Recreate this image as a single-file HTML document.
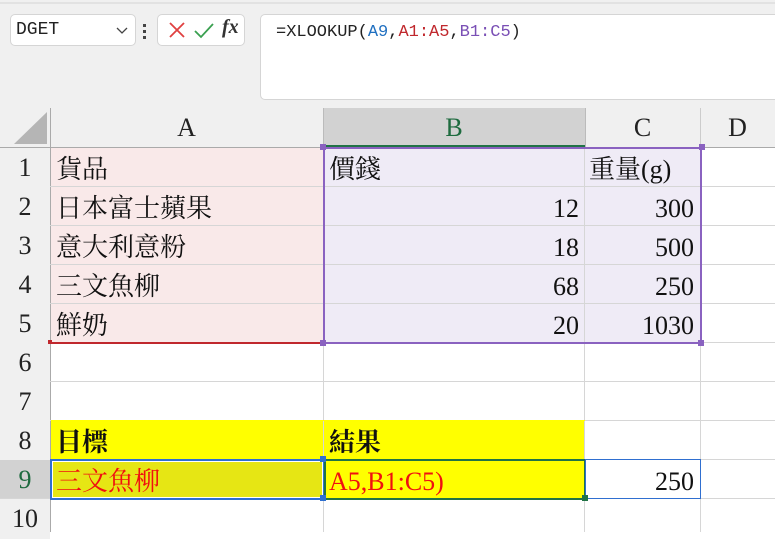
<!DOCTYPE html>
<html><head><meta charset="utf-8"><style>
*{margin:0;padding:0;box-sizing:border-box}
body{width:775px;height:532px;overflow:hidden;background:#fff;position:relative;font-family:"Liberation Serif","Noto Serif CJK TC","Noto Serif CJK SC",serif}
.a{position:absolute}
.top{left:0;top:0;width:775px;height:108px;background:#f0f0f0}
.box{background:#fff;border:1px solid #d5d5d5;border-radius:5px}
.mono{font-family:"Liberation Mono",monospace;font-size:17px}
.hdr{background:#f0f0f0;color:#222;font-size:26px;text-align:center;line-height:40px}
.cell{font-size:26px;line-height:38px;color:#111;white-space:nowrap}
.hl{background:#d4d4d4}
.r{text-align:right;padding-right:6px}
</style></head><body>
<div class="a top"></div>
<div class="a" style="left:0;top:2px;width:775px;height:2px;background:#e2e2e2"></div>
<div class="a box" style="left:10px;top:14px;width:126px;height:32px"></div>
<div class="a" style="left:16px;top:20px;font-family:'Liberation Mono',monospace;font-size:18px;color:#222">DGET</div>
<svg class="a" style="left:116px;top:27px" width="12" height="8"><path d="M1 1 L6 6 L11 1" stroke="#444" fill="none" stroke-width="1.3"/></svg>
<div class="a" style="left:143px;top:24px;width:3px;height:3px;background:#444"></div>
<div class="a" style="left:143px;top:30px;width:3px;height:3px;background:#444"></div>
<div class="a" style="left:143px;top:36px;width:3px;height:3px;background:#444"></div>
<div class="a box" style="left:157px;top:14px;width:88px;height:32px"></div>
<svg class="a" style="left:168px;top:21px" width="18" height="18"><path d="M2 2 L16 16 M16 2 L2 16" stroke="#e04040" stroke-width="1.8"/></svg>
<svg class="a" style="left:193px;top:21px" width="22" height="18"><path d="M2 10 L8 16 L20 3" stroke="#3aa050" fill="none" stroke-width="1.8"/></svg>
<div class="a" style="left:222px;top:16px;font-style:italic;font-weight:bold;font-size:20px;color:#333">fx</div>
<div class="a box" style="left:260px;top:14px;width:530px;height:86px"></div>
<div class="a mono" style="left:276px;top:23px;color:#222">=XLOOKUP(<span style="color:#1f6fc0">A9</span>,<span style="color:#c0282d">A1:A5</span>,<span style="color:#7a4fb5">B1:C5</span>)</div>

<div class="a" style="left:0;top:108px;width:775px;height:40px;background:#f0f0f0"></div>
<svg class="a" style="left:14px;top:112px" width="34" height="33"><path d="M33 0 L33 32 L0 32 Z" fill="#b5b5b5"/></svg>
<div class="a hdr" style="left:50px;top:108px;width:273px">A</div>
<div class="a hdr hl" style="left:323px;top:108px;width:262px;color:#1e6b3f;background:#d2d2d2">B</div>
<div class="a" style="left:323px;top:145px;width:262px;height:2px;background:#217346"></div>
<div class="a hdr" style="left:585px;top:108px;width:115px">C</div>
<div class="a hdr" style="left:700px;top:108px;width:75px">D</div>
<div class="a" style="left:323px;top:108px;width:1px;height:39px;background:#bbb"></div>
<div class="a" style="left:585px;top:108px;width:1px;height:39px;background:#bbb"></div>
<div class="a" style="left:700px;top:108px;width:1px;height:39px;background:#ccc"></div>
<div class="a" style="left:0;top:147px;width:775px;height:1px;background:#aaa"></div>
<div class="a" style="left:0;top:148px;width:50px;height:384px;background:#f0f0f0"></div>
<div class="a" style="left:50px;top:108px;width:1px;height:424px;background:#aaa"></div>

<div class="a" style="left:51px;top:148px;width:272px;height:195px;background:#f9e9e9"></div>
<div class="a" style="left:324px;top:148px;width:377px;height:195px;background:#efebf6"></div>
<div class="a" style="left:51px;top:421px;width:534px;height:39px;background:#ffff00"></div>
<div class="a" style="left:51px;top:460px;width:272px;height:39px;background:#e6e614"></div>
<div class="a" style="left:324px;top:460px;width:261px;height:39px;background:#ffff00"></div>

<div class="a" style="left:0;top:186px;width:775px;height:1px;background:#d6d6d6"></div>
<div class="a" style="left:0;top:225px;width:775px;height:1px;background:#d6d6d6"></div>
<div class="a" style="left:0;top:264px;width:775px;height:1px;background:#d6d6d6"></div>
<div class="a" style="left:0;top:303px;width:775px;height:1px;background:#d6d6d6"></div>
<div class="a" style="left:0;top:342px;width:775px;height:1px;background:#d6d6d6"></div>
<div class="a" style="left:0;top:381px;width:775px;height:1px;background:#d6d6d6"></div>
<div class="a" style="left:0;top:420px;width:775px;height:1px;background:#d6d6d6"></div>
<div class="a" style="left:0;top:459px;width:775px;height:1px;background:#d6d6d6"></div>
<div class="a" style="left:0;top:498px;width:775px;height:1px;background:#d6d6d6"></div>
<div class="a" style="left:584px;top:148px;width:1px;height:384px;background:#d6d6d6"></div>
<div class="a" style="left:700px;top:148px;width:1px;height:384px;background:#d6d6d6"></div>
<div class="a" style="left:323px;top:343px;width:1px;height:189px;background:#d6d6d6"></div>
<div class="a" style="left:51px;top:420px;width:534px;height:1px;background:#ffff00"></div>

<div class="a hdr" style="left:0;top:148px;width:50px">1</div>
<div class="a hdr" style="left:0;top:187px;width:50px">2</div>
<div class="a hdr" style="left:0;top:226px;width:50px">3</div>
<div class="a hdr" style="left:0;top:265px;width:50px">4</div>
<div class="a hdr" style="left:0;top:304px;width:50px">5</div>
<div class="a hdr" style="left:0;top:343px;width:50px">6</div>
<div class="a hdr" style="left:0;top:382px;width:50px">7</div>
<div class="a hdr" style="left:0;top:421px;width:50px">8</div>
<div class="a hdr" style="left:0;top:460px;width:50px;height:38px;background:#d2d2d2;color:#1e6b3f">9</div>
<div class="a hdr" style="left:0;top:499px;width:50px">10</div>

<div class="a cell" style="left:56px;top:151px">貨品</div>
<div class="a cell" style="left:56px;top:190px">日本富士蘋果</div>
<div class="a cell" style="left:56px;top:229px">意大利意粉</div>
<div class="a cell" style="left:56px;top:268px">三文魚柳</div>
<div class="a cell" style="left:56px;top:307px">鮮奶</div>
<div class="a cell" style="left:329px;top:151px">價錢</div>
<div class="a cell" style="left:589px;top:151px">重量(g)</div>
<div class="a cell r" style="left:324px;top:190px;width:261px">12</div>
<div class="a cell r" style="left:324px;top:229px;width:261px">18</div>
<div class="a cell r" style="left:324px;top:268px;width:261px">68</div>
<div class="a cell r" style="left:324px;top:307px;width:261px">20</div>
<div class="a cell r" style="left:585px;top:190px;width:115px">300</div>
<div class="a cell r" style="left:585px;top:229px;width:115px">500</div>
<div class="a cell r" style="left:585px;top:268px;width:115px">250</div>
<div class="a cell r" style="left:585px;top:307px;width:115px">1030</div>
<div class="a cell" style="left:56px;top:424px;font-weight:bold">目標</div>
<div class="a cell" style="left:329px;top:424px;font-weight:bold">結果</div>
<div class="a cell" style="left:56px;top:463px;color:#f01010">三文魚柳</div>
<div class="a cell" style="left:329px;top:463px;color:#f01010">A5,B1:C5)</div>
<div class="a cell r" style="left:585px;top:463px;width:115px">250</div>

<div class="a" style="left:50px;top:147px;width:274px;height:197px;border-bottom:2px solid #c0282d"></div>
<div class="a" style="left:323px;top:147px;width:379px;height:197px;border:2px solid #8a62c0"></div>
<div class="a" style="left:320px;top:144px;width:6px;height:6px;background:#8a62c0"></div>
<div class="a" style="left:699px;top:144px;width:6px;height:6px;background:#8a62c0"></div>
<div class="a" style="left:320px;top:340px;width:6px;height:6px;background:#8a62c0"></div>
<div class="a" style="left:698px;top:340px;width:6px;height:6px;background:#8a62c0"></div>
<div class="a" style="left:48px;top:340px;width:4px;height:4px;background:#c0282d"></div>
<div class="a" style="left:50px;top:459px;width:275px;height:41px;border:2px solid #2f6fd0"></div>
<div class="a" style="left:52px;top:461px;width:271px;height:37px;border:1px solid #fff"></div>
<div class="a" style="left:324px;top:459px;width:262px;height:41px;border:2px solid #217346"></div>
<div class="a" style="left:585px;top:459px;width:116px;height:40px;border:1px solid #2f6fd0"></div>
<div class="a" style="left:320px;top:456px;width:6px;height:6px;background:#2f6fd0"></div>
<div class="a" style="left:320px;top:495px;width:6px;height:6px;background:#2f6fd0"></div>
<div class="a" style="left:582px;top:495px;width:6px;height:6px;background:#217346"></div>
</body></html>
